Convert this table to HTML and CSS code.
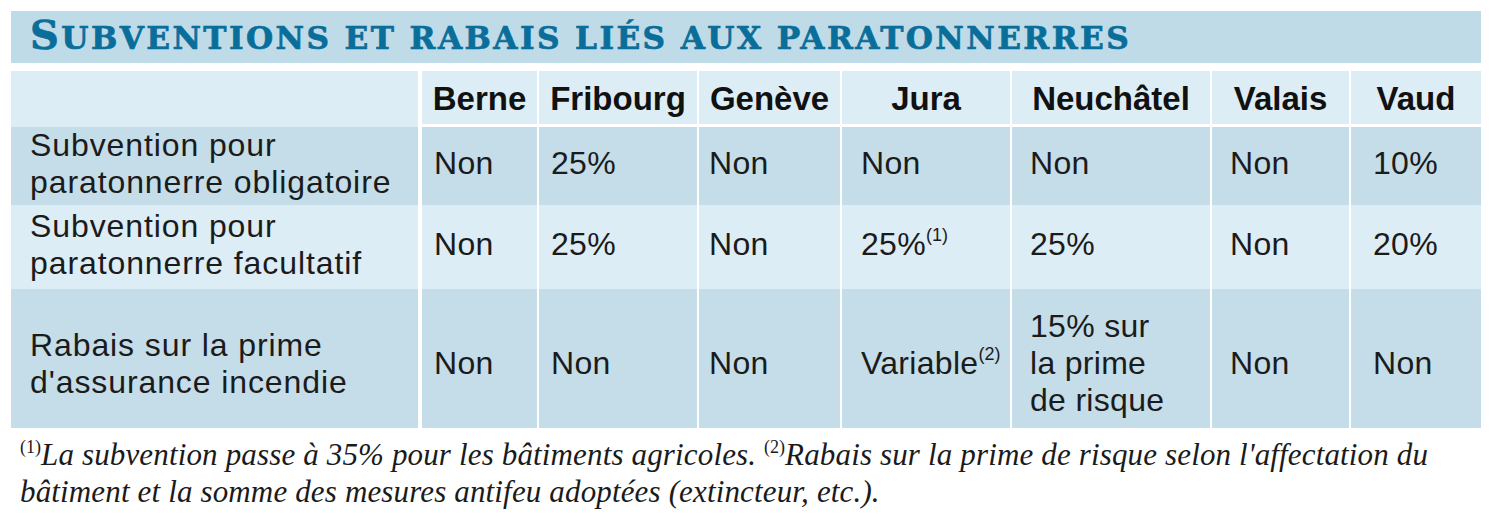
FILE: index.html
```html
<!DOCTYPE html>
<html lang="fr">
<head>
<meta charset="utf-8">
<title>Subventions et rabais liés aux paratonnerres</title>
<link rel="stylesheet" href="styles.css">
</head>
<body>
<div class="page">
  <h1 class="title">S<span class="sc">ubventions et rabais liés aux paratonnerres</span></h1>
  <div class="grid">
    <div class="cell head first"></div>
    <div class="cell head"><span>Berne</span></div>
    <div class="cell head"><span>Fribourg</span></div>
    <div class="cell head"><span>Genève</span></div>
    <div class="cell head"><span>Jura</span></div>
    <div class="cell head"><span>Neuchâtel</span></div>
    <div class="cell head"><span>Valais</span></div>
    <div class="cell head"><span>Vaud</span></div>

    <div class="cell label dark"><span>Subvention pour<br>paratonnerre obligatoire</span></div>
    <div class="cell dark c1"><span>Non</span></div>
    <div class="cell dark c2"><span>25%</span></div>
    <div class="cell dark c3"><span>Non</span></div>
    <div class="cell dark c4"><span>Non</span></div>
    <div class="cell dark c5"><span>Non</span></div>
    <div class="cell dark c6"><span>Non</span></div>
    <div class="cell dark c7"><span>10%</span></div>

    <div class="cell label light"><span>Subvention pour<br>paratonnerre facultatif</span></div>
    <div class="cell light c1"><span>Non</span></div>
    <div class="cell light c2"><span>25%</span></div>
    <div class="cell light c3"><span>Non</span></div>
    <div class="cell light c4"><span>25%<sup>(1)</sup></span></div>
    <div class="cell light c5"><span>25%</span></div>
    <div class="cell light c6"><span>Non</span></div>
    <div class="cell light c7"><span>20%</span></div>

    <div class="cell label dark tall"><span>Rabais sur la prime<br>d'assurance incendie</span></div>
    <div class="cell dark tall c1"><span>Non</span></div>
    <div class="cell dark tall c2"><span>Non</span></div>
    <div class="cell dark tall c3"><span>Non</span></div>
    <div class="cell dark tall c4"><span>Variable<sup>(2)</sup></span></div>
    <div class="cell dark tall c5"><span>15% sur<br>la prime<br>de risque</span></div>
    <div class="cell dark tall c6"><span>Non</span></div>
    <div class="cell dark tall c7"><span>Non</span></div>
  </div>
  <p class="notes"><sup>(1)</sup>La subvention passe à 35% pour les bâtiments agricoles. <sup>(2)</sup>Rabais sur la prime de risque selon l'affectation du<br>bâtiment et la somme des mesures antifeu adoptées (extincteur, etc.).</p>
</div>
</body>
</html>
```
FILE: styles.css
```css
html, body {
  margin: 0;
  padding: 0;
  background: #ffffff;
}

.page {
  padding: 11px 19px 0 11px;
  width: 1470px;
}

.title {
  margin: 0 0 8px 0;
  height: 52px;
  box-sizing: border-box;
  padding: 4px 0 0 19px;
  background: #c0dbe8;
  color: #0a6e9b;
  font-family: "DejaVu Serif", "Liberation Serif", serif;
  font-weight: bold;
  font-size: 40px;
  line-height: 40px;
  letter-spacing: 2.4px;
  white-space: nowrap;
  -webkit-text-stroke: 0.7px #0a6e9b;
}

.title .sc {
  text-transform: uppercase;
  font-size: 0.78em;
}

.grid {
  display: grid;
  grid-template-columns: 407px 119px 160px 143px 170px 200px 139px 132px;
  grid-template-rows: 56px 78px 84px 139px;
  font-family: "Liberation Sans", Arial, sans-serif;
  color: #1b1b1b;
}

.cell {
  box-sizing: border-box;
  display: flex;
  align-items: center;
  border-left: 2px solid #ffffff;
  font-size: 32px;
  line-height: 37px;
  letter-spacing: 0.3px;
}

.cell.head {
  justify-content: center;
  background: #ddedf5;
  border-bottom: 3px solid #ffffff;
  font-weight: bold;
  font-size: 33px;
  color: #111111;
  letter-spacing: 0;
  padding-top: 2px;
}

.cell.head.first {
  border-left: none;
  border-bottom-color: #ddedf5;
}

.grid > .cell:nth-child(8n+2) {
  border-left-width: 4px;
}

.cell.label {
  border-left: none;
  padding-left: 19px;
  letter-spacing: 0.9px;
}

.dark {
  background: #c4dde9;
}

.light {
  background: #ddedf5;
}

.dark, .light {
  padding-bottom: 5px;
}

.dark.tall {
  padding-top: 10px;
  padding-bottom: 0;
}

.c1, .c2 { padding-left: 12px; }
.c3 { padding-left: 10px; }
.c4 { padding-left: 19px; }
.c5, .c6 { padding-left: 18px; }
.c7 { padding-left: 22px; }

.cell sup {
  font-size: 18px;
  line-height: 0;
  vertical-align: 14px;
  letter-spacing: 0;
}

.notes {
  margin: 8px 0 0 9px;
  font-family: "Liberation Serif", "DejaVu Serif", serif;
  font-style: italic;
  font-size: 31px;
  line-height: 37px;
  letter-spacing: 0.15px;
  color: #1b1b1b;
}

.notes sup {
  font-style: normal;
  font-size: 18px;
  line-height: 0;
  vertical-align: 12px;
  letter-spacing: 0;
}
```
